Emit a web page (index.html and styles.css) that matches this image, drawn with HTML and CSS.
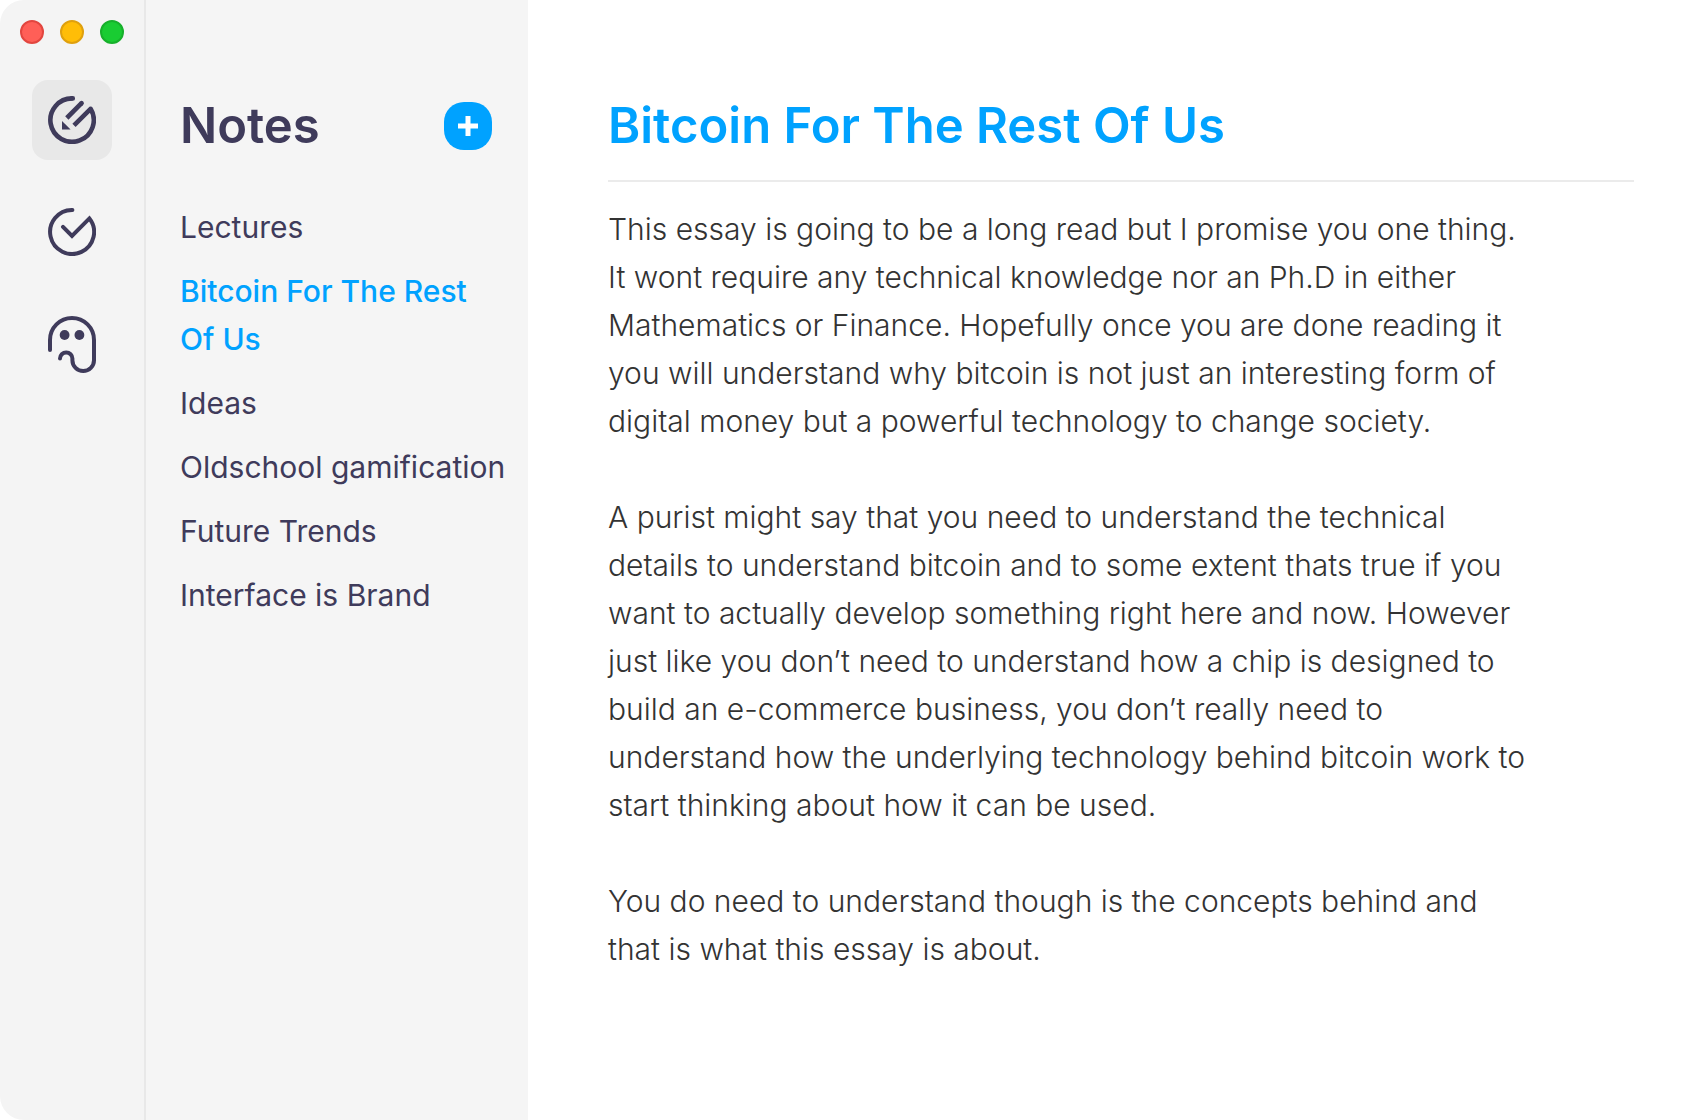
FILE: index.html
```html
<!DOCTYPE html>
<html lang="en">
<head>
    <meta charset="UTF-8">
    <meta name="viewport" content="width=device-width, initial-scale=1.0">
    <title>Notes</title>
    <link rel="stylesheet" href="styles.css">
</head>
<body>
    <div class="window">
        <div class="rail">
            <div class="controls">
                <button class="dot close" aria-label="Close"></button>
                <button class="dot minimize" aria-label="Minimize"></button>
                <button class="dot zoom" aria-label="Zoom"></button>
            </div>
            <nav class="apps">
                <a href="#" class="app active" aria-label="Notes">
                    <svg width="48" height="48" viewBox="0 0 48 48" fill="none" stroke="currentColor" stroke-width="4.6" stroke-linejoin="round">
                        <path d="M24.5 2.4A21.7 21.7 0 1 0 42.6 12.8L26 29.4"/>
                        <path d="M33.6 7.2L18.8 22"/>
                        <path d="M24 2.4h.8M33.6 7.2l-.4.4" stroke-linecap="round"/>
                        <path d="M14 25v8.6h8.6z" fill="currentColor" stroke="none"/>
                    </svg>
                </a>
                <a href="#" class="app" aria-label="Tasks">
                    <svg width="48" height="48" viewBox="0 0 48 48" fill="none" stroke="currentColor" stroke-width="4" stroke-linecap="round">
                        <path d="M24.4 2A22 22 0 1 0 41.4 10.4L24 27.8L15 18.8"/>
                    </svg>
                </a>
                <a href="#" class="app" aria-label="Ghost">
                    <svg width="48" height="56" viewBox="0 0 48 56" overflow="visible" fill="none" stroke="currentColor" stroke-width="4" stroke-linecap="round">
                        <path d="M2 34V24A22 22 0 0 1 46 24V44.2A10.8 10.8 0 0 1 24.4 44.2V42.6A6.2 6.2 0 0 0 12 42.6"/>
                        <circle cx="16.6" cy="19" r="4.9" fill="currentColor" stroke="none"/>
                        <circle cx="31.4" cy="19" r="4.9" fill="currentColor" stroke="none"/>
                    </svg>
                </a>
            </nav>
        </div>
        <div class="sidebar">
            <div class="header">
                <h2 class="title">Notes</h2>
                <button class="add" aria-label="Add note">
                    <svg width="20" height="20" viewBox="0 0 20 20" stroke="currentColor" stroke-width="5">
                        <path d="M10 0v20M0 10h20"/>
                    </svg>
                </button>
            </div>
            <ul class="list">
                <li><a href="#">Lectures</a></li>
                <li><a href="#" class="selected">Bitcoin For The Rest Of Us</a></li>
                <li><a href="#">Ideas</a></li>
                <li><a href="#">Oldschool gamification</a></li>
                <li><a href="#">Future Trends</a></li>
                <li><a href="#">Interface is Brand</a></li>
            </ul>
        </div>
        <main class="note">
            <h1 class="title">Bitcoin For The Rest Of Us</h1>
            <div class="text">
                <p>This essay is going to be a long read but I promise you one thing. It wont require any technical knowledge nor an Ph.D in either Mathematics or Finance. Hopefully once you are done reading it you will understand why bitcoin is not just an interesting form of digital money but a powerful technology to change society.</p>
                <p>A purist might say that you need to understand the technical details to understand bitcoin and to some extent thats true if you want to actually develop something right here and now. However just like you don’t need to understand how a chip is designed to build an e-commerce business, you don’t really need to understand how the underlying technology behind bitcoin work to start thinking about how it can be used.</p>
                <p>You do need to understand though is the concepts behind and that is what this essay is about.</p>
            </div>
        </main>
    </div>
</body>
</html>
```
FILE: styles.css
```css
*{
    padding: 0;
    margin: 0;
    box-sizing: border-box;
}
body{
    background-color: #fff;
    color: #3f3b5b;
    font-family: Inter, "Liberation Sans", sans-serif;
    font-size: 30px;
    line-height: 48px;
}
a{
    color: inherit;
    text-decoration: none;
}
button{
    border: none;
    cursor: pointer;
}
.window{
    display: flex;
    min-height: 100vh;
    border-radius: 24px;
    overflow: hidden;
}
.rail{
    flex: none;
    width: 146px;
    background-color: #f4f4f4;
    border-right: 2px solid #e8e8e8;
}
.controls{
    display: flex;
    gap: 16px;
    padding: 20px;
}
.dot{
    width: 24px;
    height: 24px;
    border-radius: 50%;
    border: 2px solid;
}
.close{
    background-color: #ff5f57;
    border-color: #e2463f;
}
.minimize{
    background-color: #ffbd07;
    border-color: #dfa00e;
}
.zoom{
    background-color: #19cc32;
    border-color: #17b02b;
}
.apps{
    display: flex;
    flex-direction: column;
    align-items: center;
    gap: 32px;
    padding-top: 16px;
}
.app{
    display: flex;
    align-items: center;
    justify-content: center;
    width: 80px;
    height: 80px;
    border-radius: 16px;
}
.app.active{
    background-color: #e8e8e8;
}
.sidebar{
    flex: none;
    width: 382px;
    padding: 96px 0 32px 34px;
    background-color: #f5f5f5;
}
.header{
    display: flex;
    align-items: center;
    justify-content: space-between;
    padding-right: 36px;
}
.title{
    font-size: 49px;
    font-weight: 600;
    line-height: 60px;
}
.add{
    display: flex;
    align-items: center;
    justify-content: center;
    width: 48px;
    height: 48px;
    border-radius: 20px;
    background-color: #00a2ff;
    color: #fff;
}
.list{
    display: flex;
    flex-direction: column;
    gap: 16px;
    padding: 47px 16px 0 0;
    list-style: none;
}
.list a{
    display: block;
}
.list .selected{
    padding-right: 20px;
    color: #00a2ff;
    font-weight: 500;
}
.note{
    flex: 1;
    padding: 96px 74px 32px 80px;
}
.note .title{
    padding-bottom: 24px;
    border-bottom: 2px solid #ebebeb;
    color: #00a2ff;
}
.text{
    padding: 23px 104px 0 0;
    color: #333;
    font-weight: 300;
}
.text p{
    margin-bottom: 48px;
}
```
